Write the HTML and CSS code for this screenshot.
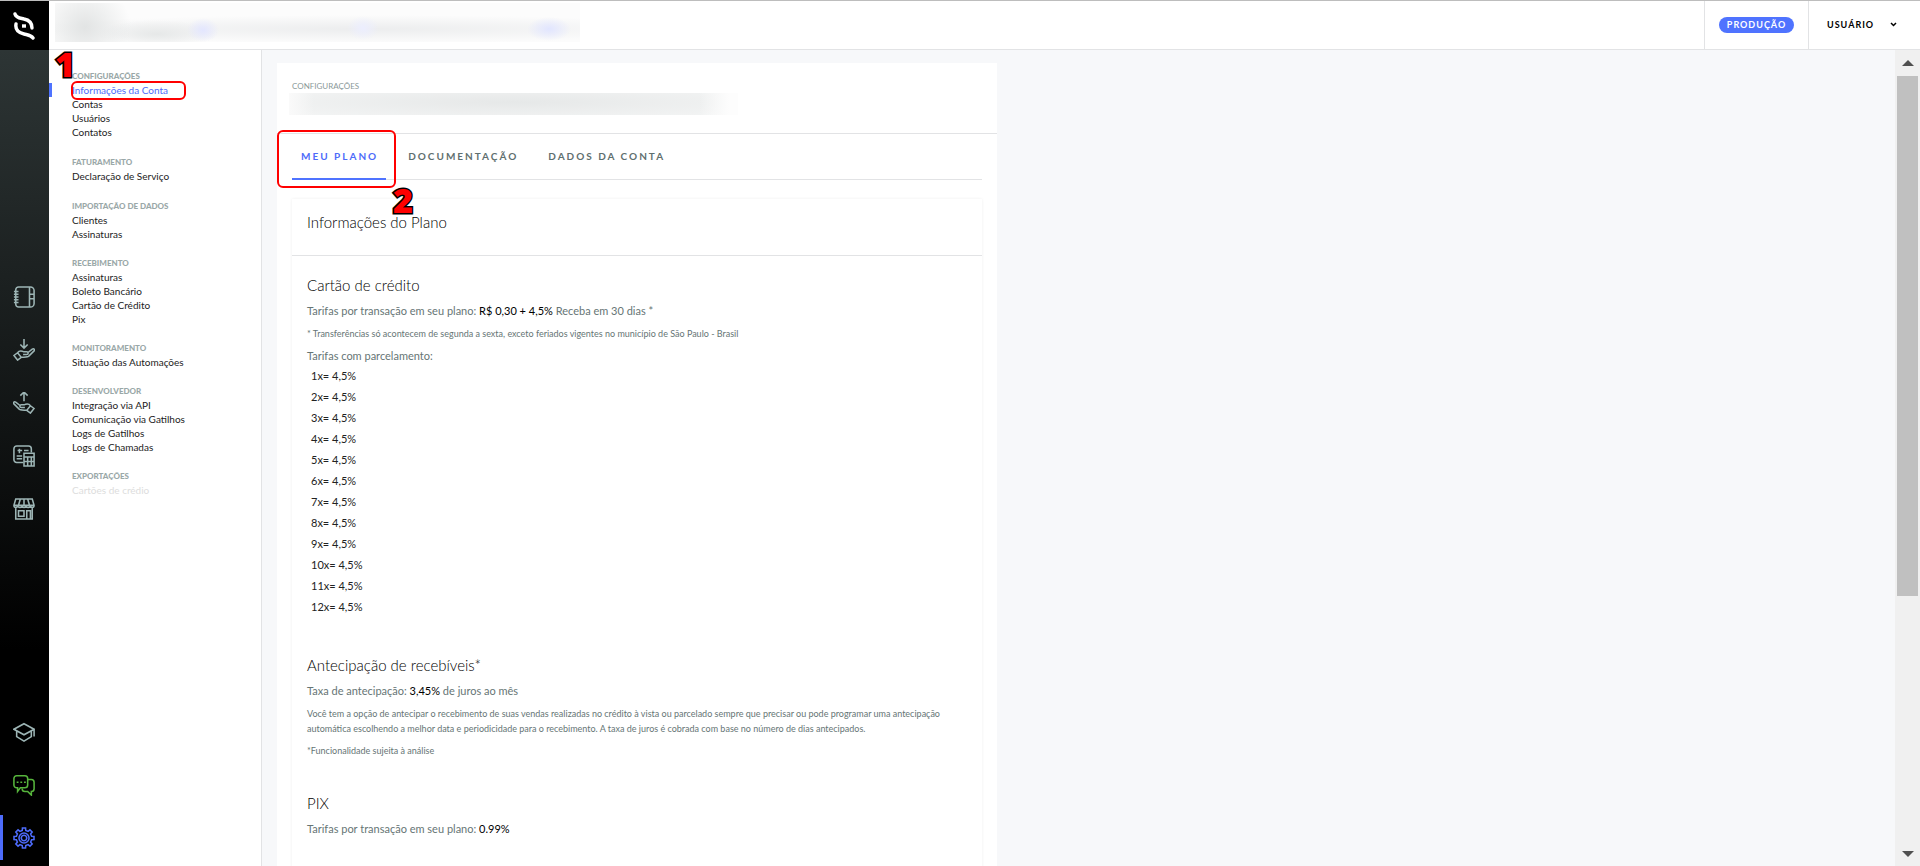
FILE: index.html
```
<!DOCTYPE html>
<html lang="pt-BR">
<head>
<meta charset="UTF-8">
<meta name="viewport" content="width=device-width, initial-scale=1">
<title>Configurações - Meu Plano</title>
<link rel="stylesheet" href="styles.css">
</head>
<body>
<nav class="rail">
  <a class="logo" href="#" aria-label="Início">
    <svg width="22" height="28" viewBox="0 0 22 28" fill="none" stroke="#fff" stroke-width="3.4" stroke-linecap="round">
      <path d="M2 2c1 4 5 4 9 5 5 1 8 4 8 9"/>
      <path d="M3 12c-1 6 3 9 8 10 4 1 7 1 9 4"/>
      <path d="M9 14h4" stroke-linecap="butt"/>
    </svg>
  </a>
  <div class="rail-main">
    <a href="#" aria-label="Contatos"><svg viewBox="0 0 24 24"><path d="M6 1h13a4 4 0 0 1 4 4v14a4 4 0 0 1-4 4H6a3 3 0 0 1-3-3V4a3 3 0 0 1 3-3zM18 1v22M18 9h5M18 14h5M1 6h5M1 9h5M1 12h5M1 15h5M1 18h5"/></svg></a>
    <a href="#" aria-label="Recebimentos"><svg viewBox="0 0 24 24"><path d="M12 0v9M8 6l4 4 4-4M1 18l4-3 4 5-4 3zM5 15c2-3 5-2 7-1h3c2 0 2 3 0 3h-4M16 15l5-4c2-1 3 1 2 2l-6 6c-2 1-5 1-8 1"/></svg></a>
    <a href="#" aria-label="Pagamentos"><svg viewBox="0 0 24 24"><path d="M12 10V1M8 4l4-4 4 4M23 18l-4-3-4 5 4 3zM19 15c-2-3-5-2-7-1H9c-2 0-2 3 0 3h4M8 15l-5-4c-2-1-3 1-2 2l6 6c2 1 5 1 8 1"/></svg></a>
    <a href="#" aria-label="Faturas"><svg viewBox="0 0 24 24"><path d="M11 19H4a3 3 0 0 1-3-3V4a3 3 0 0 1 3-3h13a3 3 0 0 1 3 3v4M5 6h5M7 4v5M12 6h5M4 12h6M4 15h6M12 9h11v14H12zM12 13h11M16 13v10M20 13v10M12 18h11"/></svg></a>
    <a href="#" aria-label="Loja"><svg viewBox="0 0 24 24"><path d="M3 1h18l2 7c0 3-4 3-4 0 0 3-5 3-5 0 0 3-4 3-4 0 0 3-5 3-5 0 0 3-4 3-4 0zM1 8h22M8 1L6 8M12 1v7M16 1l2 7M3 10v13h18V10M6 14h6v6H6zM15 23v-9h4v9"/></svg></a>
  </div>
  <div class="rail-foot">
    <a href="#" aria-label="Ajuda"><svg viewBox="0 0 24 24"><path d="M12 3l11 6-11 6L1 9zM4 11v6l8 5 8-5v-6M23 9v8"/></svg></a>
    <a class="chat" href="#" aria-label="Chat"><svg viewBox="0 0 24 24"><path d="M4 2h9a3 3 0 0 1 3 3v7a3 3 0 0 1-3 3H8l-3 4v-4H4a3 3 0 0 1-3-3V5a3 3 0 0 1 3-3zM16 6h4a3 3 0 0 1 3 3v7a3 3 0 0 1-3 3v4l-4-4h-3a3 3 0 0 1-3-3M4 9h2M8 9h2M12 9h2"/></svg></a>
    <a class="current" href="#" aria-label="Configurações"><svg viewBox="-12 -12 24 24"><path d="M-1.9-8.3L-1.7-10.9H1.7L1.9-8.3 4.5-7.2 6.5-8.9 8.9-6.5 7.2-4.5 8.3-1.9 10.9-1.7V1.7L8.3 1.9 7.2 4.5 8.9 6.5 6.5 8.9 4.5 7.2 1.9 8.3 1.7 10.9H-1.7L-1.9 8.3-4.5 7.2-6.5 8.9-8.9 6.5-7.2 4.5-8.3 1.9-10.9 1.7V-1.7L-8.3-1.9-7.2-4.5-8.9-6.5-6.5-8.9-4.5-7.2z"/><circle r="5.5"/><circle r="3"/></svg></a>
  </div>
</nav>

<div class="page">
  <header class="topbar">
    <div class="account-blur"></div>
    <div class="env"><span class="pill">PRODUÇÃO</span></div>
    <button class="user" type="button">USUÁRIO
      <svg width="7" height="5" viewBox="0 0 7 5" fill="none" stroke="#000" stroke-width="1.5"><path d="M1 1l2.5 2.5L6 1"/></svg>
    </button>
  </header>

  <div class="body">
    <aside class="menu">
      <section>
        <h2>CONFIGURAÇÕES</h2>
        <a class="active" href="#">Informações da Conta<span class="mark mark-menu"></span><span class="step step-menu">1</span></a>
        <a href="#">Contas</a>
        <a href="#">Usuários</a>
        <a href="#">Contatos</a>
      </section>
      <section>
        <h2>FATURAMENTO</h2>
        <a href="#">Declaração de Serviço</a>
      </section>
      <section>
        <h2>IMPORTAÇÃO DE DADOS</h2>
        <a href="#">Clientes</a>
        <a href="#">Assinaturas</a>
      </section>
      <section>
        <h2>RECEBIMENTO</h2>
        <a href="#">Assinaturas</a>
        <a href="#">Boleto Bancário</a>
        <a href="#">Cartão de Crédito</a>
        <a href="#">Pix</a>
      </section>
      <section>
        <h2>MONITORAMENTO</h2>
        <a href="#">Situação das Automações</a>
      </section>
      <section>
        <h2>DESENVOLVEDOR</h2>
        <a href="#">Integração via API</a>
        <a href="#">Comunicação via Gatilhos</a>
        <a href="#">Logs de Gatilhos</a>
        <a href="#">Logs de Chamadas</a>
      </section>
      <section>
        <h2>EXPORTAÇÕES</h2>
        <a class="disabled" href="#">Cartões de crédio</a>
      </section>
    </aside>

    <main class="content">
      <div class="card">
        <div class="card-head">
          <p class="crumb">CONFIGURAÇÕES</p>
          <div class="title-blur"></div>
        </div>
        <div class="tabs">
          <button class="tab selected" type="button">MEU PLANO<span class="mark mark-tab"></span><span class="step step-tab">2</span></button>
          <button class="tab" type="button">DOCUMENTAÇÃO</button>
          <button class="tab" type="button">DADOS DA CONTA</button>
        </div>
        <div class="plan">
          <h1>Informações do Plano</h1>
          <section>
            <h3>Cartão de crédito</h3>
            <p>Tarifas por transação em seu plano: <b>R$ 0,30 + 4,5%</b> Receba em 30 dias *</p>
            <p class="note">* Transferências só acontecem de segunda a sexta, exceto feriados vigentes no município de São Paulo - Brasil</p>
            <p>Tarifas com parcelamento:</p>
            <ul>
              <li>1x= 4,5%</li>
              <li>2x= 4,5%</li>
              <li>3x= 4,5%</li>
              <li>4x= 4,5%</li>
              <li>5x= 4,5%</li>
              <li>6x= 4,5%</li>
              <li>7x= 4,5%</li>
              <li>8x= 4,5%</li>
              <li>9x= 4,5%</li>
              <li>10x= 4,5%</li>
              <li>11x= 4,5%</li>
              <li>12x= 4,5%</li>
            </ul>
          </section>
          <section>
            <h3>Antecipação de recebíveis*</h3>
            <p>Taxa de antecipação: <b>3,45%</b> de juros ao mês</p>
            <p class="note">Você tem a opção de antecipar o recebimento de suas vendas realizadas no crédito à vista ou parcelado sempre que precisar ou pode programar uma antecipação automática escolhendo a melhor data e periodicidade para o recebimento. A taxa de juros é cobrada com base no número de dias antecipados.</p>
            <p class="note">*Funcionalidade sujeita à análise</p>
          </section>
          <section>
            <h3>PIX</h3>
            <p>Tarifas por transação em seu plano: <b>0.99%</b></p>
          </section>
        </div>
      </div>
    </main>
    <div class="scroll"><i class="up"></i><div class="track"><div class="thumb"></div></div><i class="down"></i></div>
  </div>
</div>
</body>
</html>
```
FILE: styles.css
```
*{
	box-sizing:border-box;
}
body{
	margin:0;
	height:100vh;
	display:flex;
	overflow:hidden;
	border-top:1px solid #bdbdbd;
	background:#f7f8fa;
	color:#000;
	font-family:Lato, "Open Sans", sans-serif;
	font-size:11px;
}
h1, h2, h3, p, ul{
	margin:0;
	padding:0;
	font-weight:400;
}
a{
	color:inherit;
	text-decoration:none;
}
button{
	border:0;
	padding:0;
	background:none;
	font-family:inherit;
}

/* left rail */
.rail{
	width:49px;
	flex:none;
	display:flex;
	flex-direction:column;
	background:linear-gradient(#2d3535 49px, #000 75%);
}
.logo{
	height:49px;
	padding-right:2px;
	display:flex;
	align-items:center;
	justify-content:center;
	background:#000;
}
.rail-main, .rail-foot{
	display:flex;
	flex-direction:column;
}
.rail-main{
	margin:auto 0;
	padding-top:51px;
}
.rail-main a, .rail-foot a{
	height:53px;
	padding-right:1px;
	display:flex;
	align-items:center;
	justify-content:center;
	color:#9db5b5;
}
.rail svg{
	flex:none;
}
.rail-main svg, .rail-foot svg{
	width:22px;
	height:22px;
	fill:none;
	stroke:currentColor;
	stroke-width:1.7;
}
.rail-foot .chat{
	color:#56b43c;
}
.rail-foot .current{
	height:45px;
	margin:4px 0 6px;
	border-left:3px solid #4d6bfa;
	padding-right:4px;
	color:#4d6bfa;
}

/* top bar */
.page{
	flex:1;
	min-width:0;
	display:flex;
	flex-direction:column;
}
.topbar{
	height:49px;
	flex:none;
	display:flex;
	align-items:stretch;
	background:#fff;
	border-bottom:1px solid #e2e3e5;
}
.account-blur{
	width:525px;
	height:39px;
	margin:2px auto 0 6px;
	background:
		radial-gradient(ellipse 16px 12px at 148px 27px, #e3e6ff, transparent),
		radial-gradient(ellipse 16px 12px at 308px 25px, #eceeff, transparent),
		radial-gradient(ellipse 22px 12px at 494px 26px, #e1e5ff, transparent),
		radial-gradient(ellipse 46px 44px at 30px 24px, #e2e4e4, transparent),
		radial-gradient(ellipse 60px 14px at 102px 31px, #e6e8e8, transparent),
		radial-gradient(ellipse 360px 14px at 310px 26px, #ecedee, transparent),
		#fcfcfc;
}
.env{
	width:105px;
	display:flex;
	align-items:center;
	justify-content:center;
	border-left:1px solid #e2e3e5;
	border-right:1px solid #e2e3e5;
}
.pill{
	height:16px;
	padding:0 8px;
	border-radius:8px;
	background:#4f73ff;
	color:#fff;
	font-size:9px;
	font-weight:700;
	line-height:16px;
	letter-spacing:1px;
}
.user{
	width:111px;
	padding:0 23px 2px 18px;
	display:flex;
	align-items:center;
	justify-content:space-between;
	font-size:9px;
	font-weight:700;
	letter-spacing:1px;
}

/* settings menu */
.body{
	flex:1;
	min-height:0;
	display:flex;
}
.menu{
	width:213px;
	flex:none;
	padding:19px 0 0 23px;
	background:#fff;
	border-right:1px solid #e2e3e5;
	font-size:10px;
	line-height:14px;
	color:#222;
}
.menu section{
	margin-bottom:16px;
}
.menu section:nth-child(n+3){
	margin-bottom:15px;
}
.menu h2{
	font-size:8px;
	line-height:14px;
	font-weight:900;
	color:#9aa8a8;
}
.menu a{
	display:block;
	position:relative;
}
.menu .active{
	margin-left:-23px;
	padding-left:20px;
	border-left:3px solid #4f73ff;
	color:#4d6bfa;
}
.menu .disabled{
	color:#ddd;
}

/* numbered marks */
.mark{
	position:absolute;
	border:2px solid #f00;
	border-radius:6px;
}
.mark-menu{
	left:19px;
	top:-2px;
	width:115px;
	height:19px;
}
.mark-tab{
	left:-15px;
	top:-4px;
	width:119px;
	height:58px;
}
.step{
	position:absolute;
	font-family:"Open Sans", sans-serif;
	font-size:34px;
	font-weight:800;
	line-height:24px;
	letter-spacing:0;
	color:#f00;
	-webkit-text-stroke:3px #000;
	paint-order:stroke fill;
}
.step-menu{
	left:3px;
	top:-31px;
}
.step-tab{
	left:101px;
	top:54px;
}

/* content */
.content{
	flex:1;
	min-width:0;
	padding:13px 15px 0;
	overflow:hidden;
}
.card{
	max-width:720px;
	min-height:100%;
	background:#fff;
}
.card-head{
	height:71px;
	padding:17px 12px 0;
	border-bottom:1px solid #e2e3e5;
}
.crumb{
	padding-left:3px;
	font-size:8px;
	line-height:13px;
	color:#8a9999;
}
.title-blur{
	max-width:449px;
	height:22px;
	background:
		linear-gradient(90deg, #fafafa, transparent 25px, transparent 410px, #fdfdfd 440px),
		radial-gradient(ellipse 75% 100% at 50% 42%, #e6e8e8, #f5f6f6);
}
.tabs{
	height:46px;
	margin:0 15px;
	display:flex;
	border-bottom:1px solid #e2e3e5;
}
.tab{
	height:46px;
	margin-right:13px;
	padding:0 8px 0 9px;
	position:relative;
	border-bottom:2px solid transparent;
	font-size:10px;
	font-weight:700;
	letter-spacing:2px;
	color:#5f6f6f;
}
.tab.selected{
	border-bottom-color:#4f73ff;
	color:#4d6bfa;
}
.plan{
	margin:19px 15px 0;
	padding-bottom:60px;
	box-shadow:0 0 3px #eee;
	color:#667575;
}
.plan h1, .plan h3{
	color:#000;
	font-size:15px;
	line-height:20px;
	font-weight:300;
}
.plan h1{
	height:57px;
	padding:13px 15px 0;
	border-bottom:1px solid #e2e3e5;
}
.plan section{
	padding:19px 15px 16px;
}
.plan p{
	margin-top:7px;
	line-height:16px;
}
.plan h3 + p{
	margin-top:8px;
}
.plan .note{
	font-size:9px;
	line-height:15px;
}
.plan b{
	color:#000;
	font-weight:400;
}
.plan ul{
	margin:1px 0 3px;
	padding-left:4px;
	list-style:none;
	color:#222;
	line-height:21px;
}

/* scroll bar */
.scroll{
	width:25px;
	flex:none;
	display:flex;
	flex-direction:column;
	align-items:center;
	padding:10px 0 9px;
	background:#f0f0f0;
}
.track{
	flex:1;
	width:21px;
	margin:10px 0;
}
.thumb{
	height:68%;
	background:#c0c0c0;
}
.up, .down{
	border:6px solid transparent;
}
.up{
	border-top:0;
	border-bottom-color:#505050;
}
.down{
	border-bottom:0;
	border-top-color:#505050;
}
```
